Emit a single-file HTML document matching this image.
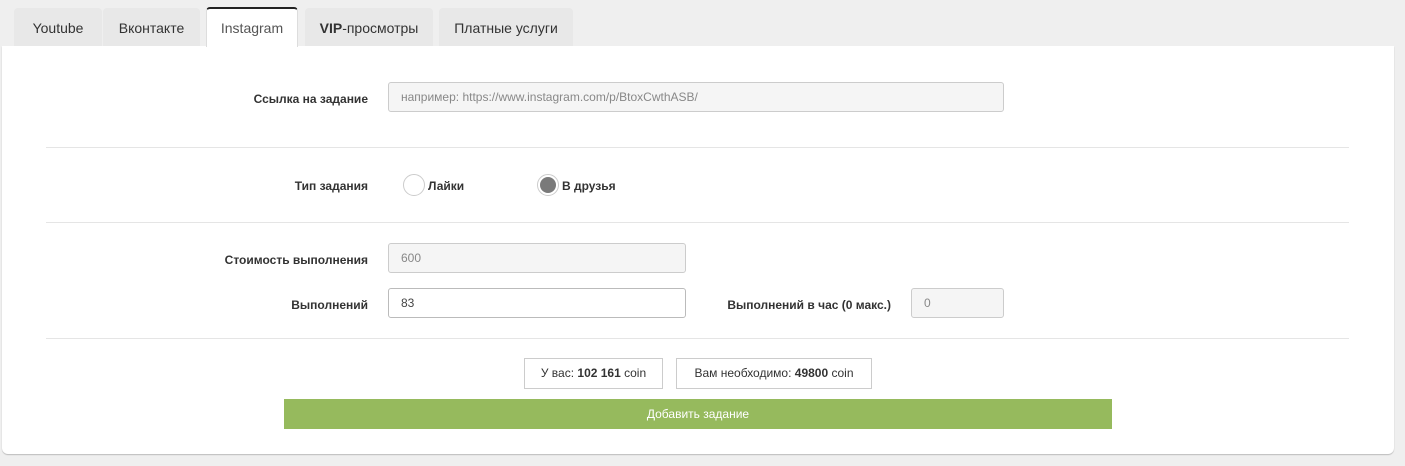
<!DOCTYPE html>
<html><head><meta charset="utf-8"><style>
*{box-sizing:border-box}
body{margin:0;width:1405px;height:466px;background:#efefef;font-family:"Liberation Sans",Arial,sans-serif;position:relative;overflow:hidden}
.tab{position:absolute;top:8px;height:38px;background:#e8e8e8;border-radius:4px 4px 0 0;font-size:14px;color:#333;line-height:40px;text-align:center}
.tab.act{background:#fff;border-top:2px solid #222;top:7px;height:40px;color:#555;line-height:38px;border-left:1px solid #ddd;border-right:1px solid #ddd}
.panel{position:absolute;left:2px;top:46px;width:1392px;height:408px;background:#fff;border-radius:0 0 6px 6px;box-shadow:0 1px 1px #bbb}
.lbl{position:absolute;font-size:12px;font-weight:bold;color:#333;text-align:right}
.inp{position:absolute;background:#f5f5f5;border:1px solid #ccc;border-radius:3px;font-size:12px;color:#888;padding-left:12px;line-height:28px}
.hr{position:absolute;left:46px;width:1303px;height:1px;background:#e5e5e5}
.box{position:absolute;top:358px;height:31px;border:1px solid #ccc;background:#fff;font-size:12px;color:#333;line-height:29px;text-align:center}
.radio{position:absolute;width:22px;height:22px;border-radius:50%;border:1px solid #ccc;background:#fff}
</style></head><body>
<div class="panel"></div>
<div class="tab" style="left:14px;width:88px">Youtube</div>
<div class="tab" style="left:103px;width:97px">Вконтакте</div>
<div class="tab act" style="left:206px;width:92px">Instagram</div>
<div class="tab" style="left:305px;width:128px"><b>VIP</b>-просмотры</div>
<div class="tab" style="left:439px;width:134px">Платные услуги</div>

<div class="lbl" style="left:200px;width:168px;top:92px">Ссылка на задание</div>
<div class="inp" style="left:388px;top:82px;width:616px;height:30px">например: https://www.instagram.com/p/BtoxCwthASB/</div>
<div class="hr" style="top:147px"></div>

<div class="lbl" style="left:200px;width:168px;top:179px">Тип задания</div>
<div class="radio" style="left:403px;top:174px"></div>
<div class="lbl" style="left:428px;top:179px;text-align:left">Лайки</div>
<div class="radio" style="left:537px;top:174px"><div style="position:absolute;left:2px;top:2px;width:16px;height:16px;border-radius:50%;background:#7a7a7a"></div></div>
<div class="lbl" style="left:562px;top:179px;text-align:left">В друзья</div>
<div class="hr" style="top:222px"></div>

<div class="lbl" style="left:150px;width:218px;top:253px">Стоимость выполнения</div>
<div class="inp" style="left:388px;top:243px;width:298px;height:30px">600</div>
<div class="lbl" style="left:200px;width:168px;top:298px">Выполнений</div>
<div class="inp" style="left:388px;top:288px;width:298px;height:30px;background:#fff;border-color:#bbb;color:#444">83</div>
<div class="lbl" style="left:700px;width:191px;top:298px">Выполнений в час (0 макс.)</div>
<div class="inp" style="left:911px;top:288px;width:93px;height:30px">0</div>
<div class="hr" style="top:338px"></div>

<div class="box" style="left:524px;width:139px">У вас: <b>102 161</b> coin</div>
<div class="box" style="left:676px;width:196px">Вам необходимо: <b>49800</b> coin</div>
<div style="position:absolute;left:284px;top:399px;width:828px;height:30px;background:#96ba5d;color:#fff;font-size:12px;text-align:center;line-height:30px">Добавить задание</div>
</body></html>
